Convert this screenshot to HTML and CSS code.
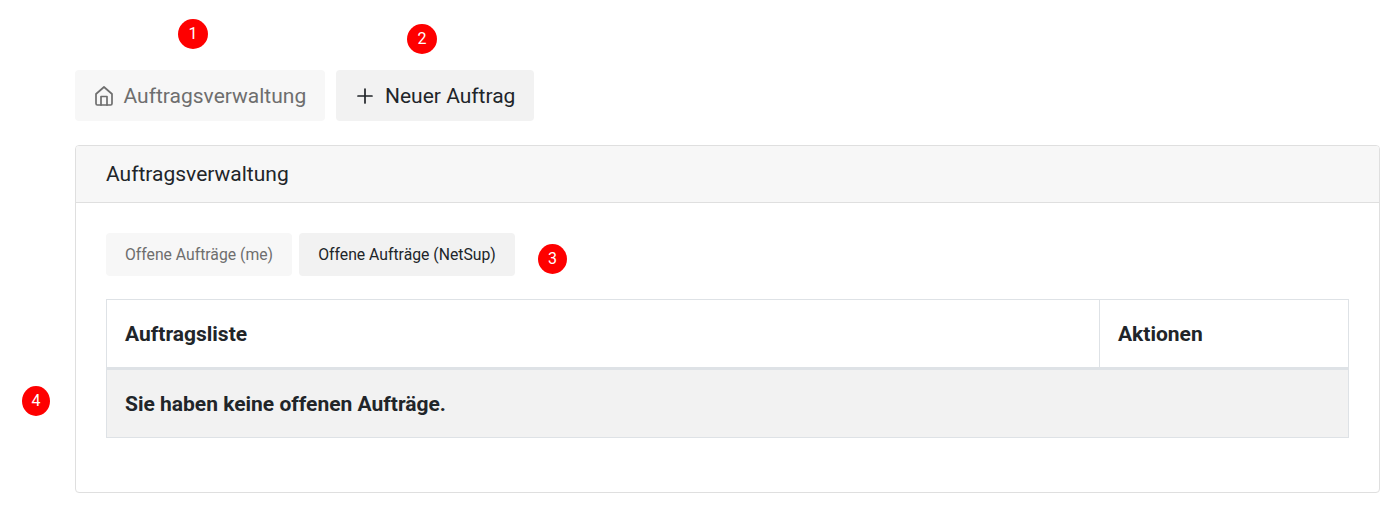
FILE: index.html
```html
<!DOCTYPE html>
<html lang="de">
<head>
<meta charset="utf-8">
<title>Auftragsverwaltung</title>
<link rel="stylesheet" href="styles.css">
</head>
<body>
<span class="badge badge-1">1</span>
<span class="badge badge-2">2</span>
<span class="badge badge-3">3</span>
<span class="badge badge-4">4</span>
<main class="page">
  <nav class="top-nav">
    <a class="nav-btn nav-btn-active">
      <svg class="icon-home" viewBox="0 0 18 20" fill="none" stroke="currentColor" stroke-width="1.7" stroke-linejoin="round" stroke-linecap="round"><path d="M1 8 9 1l8 7v9.6a1.4 1.4 0 0 1-1.4 1.4H2.4A1.4 1.4 0 0 1 1 17.600z"/><path d="M6 19v-8.500h6V19"/></svg>
      Auftragsverwaltung
    </a>
    <a class="nav-btn nav-btn-new">
      <svg class="icon-plus" viewBox="0 0 16 16" fill="none" stroke="currentColor" stroke-width="1.7" stroke-linecap="round"><path d="M8 1v14M1 8h14"/></svg>
      Neuer Auftrag
    </a>
  </nav>
  <section class="card">
    <header class="card-header">Auftragsverwaltung</header>
    <div class="card-body">
      <div class="tabs">
        <a class="tab tab-active">Offene Aufträge (me)</a>
        <a class="tab tab-other">Offene Aufträge (NetSup)</a>
      </div>
      <table class="orders">
        <thead>
          <tr><th class="col-list">Auftragsliste</th><th class="col-actions">Aktionen</th></tr>
        </thead>
        <tbody>
          <tr><td colspan="2">Sie haben keine offenen Aufträge.</td></tr>
        </tbody>
      </table>
    </div>
  </section>
</main>
</body>
</html>
```
FILE: styles.css
```css
* { box-sizing: border-box; }
html, body { margin: 0; background: #fff; }
body { font-family: Roboto, "Liberation Sans", sans-serif; color: #212529; position: relative; height: 523px; overflow: hidden; }
.page { padding: 70px 20px 0 75px; }
.top-nav { display: flex; gap: 11px; }
.nav-btn { display: flex; align-items: center; height: 51px; padding: 0 0 0 20px; border-radius: 4px; font-size: 21px; line-height: 24px; white-space: nowrap; }
.nav-btn-active { background: #f7f7f7; color: #6e6e6e; width: 250px; }
.nav-btn-new { background: #f2f2f2; color: #212529; width: 198px; padding-left: 21px; }
.icon-home { width: 18px; height: 20px; margin-right: 10.500px; flex: none; }
.icon-plus { width: 16px; height: 16px; margin-right: 12px; flex: none; }
.card { margin-top: 24px; height: 348px; border: 1px solid #dfdfdf; border-radius: 4px; }
.card-header { height: 57px; padding: 0 30px 1px; display: flex; align-items: center; background: #f7f7f7; border-bottom: 1px solid #dfdfdf; border-radius: 3px 3px 0 0; font-size: 21px; }
.card-body { padding: 30px; }
.tabs { display: flex; gap: 7px; }
.tab { height: 43px; display: flex; align-items: center; justify-content: center; border-radius: 4px; font-size: 15.750px; }
.tab-active { width: 186px; background: #f7f7f7; color: #6e6e6e; }
.tab-other { width: 216px; background: #f2f2f2; color: #212529; }
.orders { width: 1243px; margin-top: 23px; border-collapse: collapse; table-layout: fixed; font-size: 21px; }
.orders th, .orders td { border: 1px solid #dee2e6; padding: 0 18px; text-align: left; font-weight: 700; }
.orders th { height: 69px; border-bottom-width: 3px; }
.orders td { height: 69px; background: #f2f2f2; }
.col-actions { width: 249px; }
.badge { position: absolute; width: 30px; height: 30px; border-radius: 50%; background: #fe0000; color: #fff; display: flex; align-items: center; justify-content: center; font-size: 16px; padding-bottom: 1px; }
.badge-1 { left: 178px; top: 19px; }
.badge-2 { left: 407px; top: 24px; }
.badge-3 { left: 538px; top: 244px; width: 29px; }
.badge-4 { left: 22px; top: 386px; width: 28px; }
```
